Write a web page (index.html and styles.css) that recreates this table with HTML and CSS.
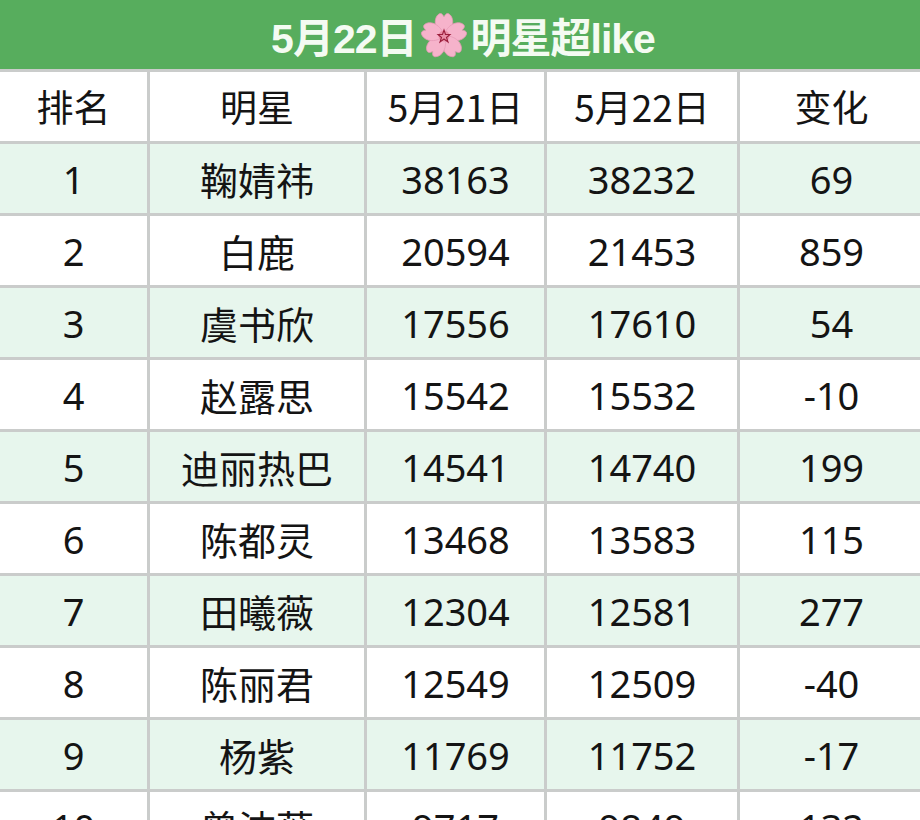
FILE: index.html
```html
<!DOCTYPE html>
<html lang="zh">
<head>
<meta charset="utf-8">
<link rel="stylesheet" href="styles.css">
</head>
<body>
<div class="page">
  <div class="title">
    <span>5月22日</span>
    <svg class="flower" viewBox="0 0 100 100" width="50" height="50">
      <g fill="#f6b3cb" stroke="#e79ab6" stroke-width="1.5">
        <g id="p"><path d="M50 50 C30 38 28 14 40 6 C45 3 48 8 50 12 C52 8 55 3 60 6 C72 14 70 38 50 50 Z"/></g>
        <use href="#p" transform="rotate(72 50 50)"/>
        <use href="#p" transform="rotate(144 50 50)"/>
        <use href="#p" transform="rotate(216 50 50)"/>
        <use href="#p" transform="rotate(288 50 50)"/>
      </g>
      <circle cx="50" cy="50" r="11" fill="#e98fa8"/>
      <polygon points="50,38 53,47 62,47 55,53 58,62 50,56 42,62 45,53 38,47 47,47" fill="none" stroke="#9b1d3c" stroke-width="2.2"/>
    </svg>
    <span>明星超like</span>
  </div>
  <table class="rank">
    <colgroup>
      <col class="c1"><col class="c2"><col class="c3"><col class="c4"><col class="c5">
    </colgroup>
    <thead>
      <tr><th>排名</th><th>明星</th><th>5月21日</th><th>5月22日</th><th>变化</th></tr>
    </thead>
    <tbody>
      <tr class="alt"><td>1</td><td>鞠婧祎</td><td>38163</td><td>38232</td><td>69</td></tr>
      <tr><td>2</td><td>白鹿</td><td>20594</td><td>21453</td><td>859</td></tr>
      <tr class="alt"><td>3</td><td>虞书欣</td><td>17556</td><td>17610</td><td>54</td></tr>
      <tr><td>4</td><td>赵露思</td><td>15542</td><td>15532</td><td>-10</td></tr>
      <tr class="alt"><td>5</td><td>迪丽热巴</td><td>14541</td><td>14740</td><td>199</td></tr>
      <tr><td>6</td><td>陈都灵</td><td>13468</td><td>13583</td><td>115</td></tr>
      <tr class="alt"><td>7</td><td>田曦薇</td><td>12304</td><td>12581</td><td>277</td></tr>
      <tr><td>8</td><td>陈丽君</td><td>12549</td><td>12509</td><td>-40</td></tr>
      <tr class="alt"><td>9</td><td>杨紫</td><td>11769</td><td>11752</td><td>-17</td></tr>
      <tr><td>10</td><td>曾沫薇</td><td>9717</td><td>9849</td><td>132</td></tr>
    </tbody>
  </table>
</div>
</body>
</html>
```

FILE: styles.css
```css
html, body {
  margin: 0;
  padding: 0;
  background: #ffffff;
}

.page {
  width: 920px;
  height: 820px;
  overflow: hidden;
}

.title {
  height: 69px;
  background: #57ad5d;
  color: #f4fbf2;
  display: flex;
  align-items: center;
  justify-content: center;
  gap: 2px;
  font-family: "Liberation Sans", "Noto Sans CJK SC", sans-serif;
  font-weight: 700;
  font-size: 41px;
  letter-spacing: -1px;
  padding-left: 6px;
}

.flower {
  display: block;
  margin-top: 2px;
}

.rank {
  border-collapse: collapse;
  table-layout: fixed;
  width: 926px;
  margin-left: -3px;
  font-family: "Noto Sans", "Noto Sans CJK SC", sans-serif;
  color: #141414;
}

.c1 { width: 150px; }
.c2 { width: 217px; }
.c3 { width: 180px; }
.c4 { width: 193px; }
.c5 { width: 186px; }

.rank th,
.rank td {
  border: 3px solid #cacccb;
  height: 69px;
  padding: 0;
  text-align: center;
  vertical-align: middle;
  font-size: 38px;
  font-weight: 400;
  line-height: 1;
}

.rank th {
  font-family: "Noto Sans CJK SC", sans-serif;
  font-size: 37px;
}

.rank td:nth-child(2) {
  font-family: "Noto Sans CJK SC", sans-serif;
  font-size: 38px;
}

.rank tr.alt td {
  background: #e7f6ed;
}
```
